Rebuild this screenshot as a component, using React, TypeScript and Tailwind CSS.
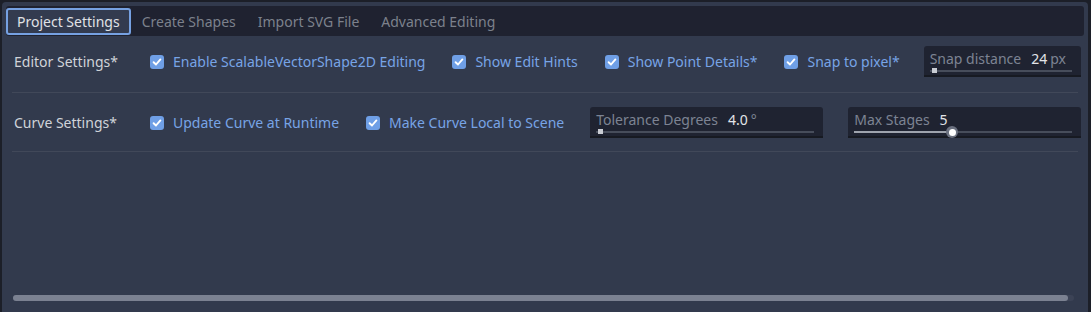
import React from "react";

const font = { fontFamily: '"Noto Sans", "Open Sans", sans-serif' };

const tabs = ["Project Settings", "Create Shapes", "Import SVG File", "Advanced Editing"];

const CheckItem = ({ label }: { label: string }) => (
  <div className="flex items-center gap-[9px] shrink-0">
    <div className="w-[14px] h-[14px] rounded-[3px] bg-[#6f9fe6] flex items-center justify-center">
      <svg width="10" height="10" viewBox="0 0 10 10">
        <path d="M1.6 5.2 L4 7.5 L8.4 2.4" fill="none" stroke="#ffffff" strokeWidth="1.9" strokeLinecap="round" strokeLinejoin="round" />
      </svg>
    </div>
    <span className="text-[14px] text-[#78a4e6] whitespace-nowrap">{label}</span>
  </div>
);

const SpinSlider = ({
  label,
  value,
  suffix,
  width,
  fill,
  round,
}: {
  label: string;
  value: string;
  suffix?: string;
  width: string;
  fill: number;
  round?: boolean;
}) => (
  <div className={`${width} h-[31px] shrink-0 rounded-t-[3px] bg-[#1f2331] border-b-2 border-[#171a22] relative px-[6px]`}>
    <div className="flex items-baseline h-[24px] pt-[2px] text-[14px] whitespace-nowrap">
      <span className="text-[#7d8393]">{label}</span>
      <span className="ml-[10px] text-[#e2e4e8]">{value}</span>
      {suffix && <span className="ml-[3px] text-[#7d8393]">{suffix}</span>}
    </div>
    <div className="absolute left-[6px] right-[9px] top-[24px] h-[2px] bg-[#474d5b]">
      {round ? (
        <>
          <div className="absolute left-0 top-0 h-[2px] bg-[#9ea3ad]" style={{ width: `${fill}%` }} />
          <div
            className="absolute top-[-5px] w-[12px] h-[12px] rounded-full bg-[#6b7180] flex items-center justify-center -ml-[6px]"
            style={{ left: `${fill}%` }}
          >
            <div className="w-[7px] h-[7px] rounded-full bg-white" />
          </div>
        </>
      ) : (
        <div className="absolute left-[2px] top-[-2px] w-[5px] h-[5px] bg-[#c9ccd3]" />
      )}
    </div>
  </div>
);

export default function App() {
  return (
    <div className="w-[1091px] h-[312px] bg-[#1c1f28] pl-[2px] pt-[2px] pr-[3px] overflow-hidden" style={font}>
      <div className="h-[320px] bg-[#323a4d] rounded-[4px] pt-[4px] pl-[4px] pr-[4px] flex flex-col">
        {/* tab bar */}
        <div className="h-[30px] bg-[#1f2230] rounded-[3px] flex items-center">
          {tabs.map((t, i) =>
            i === 0 ? (
              <div
                key={t}
                className="h-[27px] px-[9px] flex items-center bg-[#333b4f] border-2 border-[#76a1e2] rounded-[3px] text-[14px] text-[#e0e2e6]"
              >
                {t}
              </div>
            ) : (
              <div key={t} className="h-[27px] px-[11px] flex items-center text-[14px] text-[#7c818c]">
                {t}
              </div>
            )
          )}
        </div>

        {/* rows */}
        <div className="px-[6px]">
          <div className="pt-[10px] pb-[15px] border-b border-[#414859]">
            <div className="flex items-center h-[31px] pl-[2px]">
              <span className="w-[136px] shrink-0 text-[14px] text-[#d0d3d9]">Editor Settings*</span>
              <div className="flex items-center gap-[27px]">
                <CheckItem label="Enable ScalableVectorShape2D Editing" />
                <CheckItem label="Show Edit Hints" />
                <CheckItem label="Show Point Details*" />
                <CheckItem label="Snap to pixel*" />
              </div>
              <div className="ml-[24px]">
                <SpinSlider label="Snap distance" value="24" suffix="px" width="w-[157px]" fill={0} />
              </div>
            </div>
          </div>
          <div className="pt-[14px] pb-[13px] border-b border-[#414859]">
            <div className="flex items-center h-[31px] pl-[2px]">
              <span className="w-[136px] shrink-0 text-[14px] text-[#d0d3d9]">Curve Settings*</span>
              <div className="flex items-center gap-[27px]">
                <CheckItem label="Update Curve at Runtime" />
                <CheckItem label="Make Curve Local to Scene" />
              </div>
              <div className="flex items-center gap-[25px] ml-[26px]">
                <SpinSlider label="Tolerance Degrees" value="4.0" suffix="°" width="w-[233px]" fill={0} />
                <SpinSlider label="Max Stages" value="5" width="w-[233px]" fill={45} round />
              </div>
            </div>
          </div>
        </div>

        <div className="flex-1" />

        {/* horizontal scrollbar */}
        <div className="mb-[21px] ml-[7px] mr-[10px] h-[6px] rounded-full bg-[#3c4356] relative">
          <div className="absolute left-0 top-0 h-[6px] right-[6px] rounded-full bg-[#7b8191]" />
        </div>
      </div>
    </div>
  );
}
